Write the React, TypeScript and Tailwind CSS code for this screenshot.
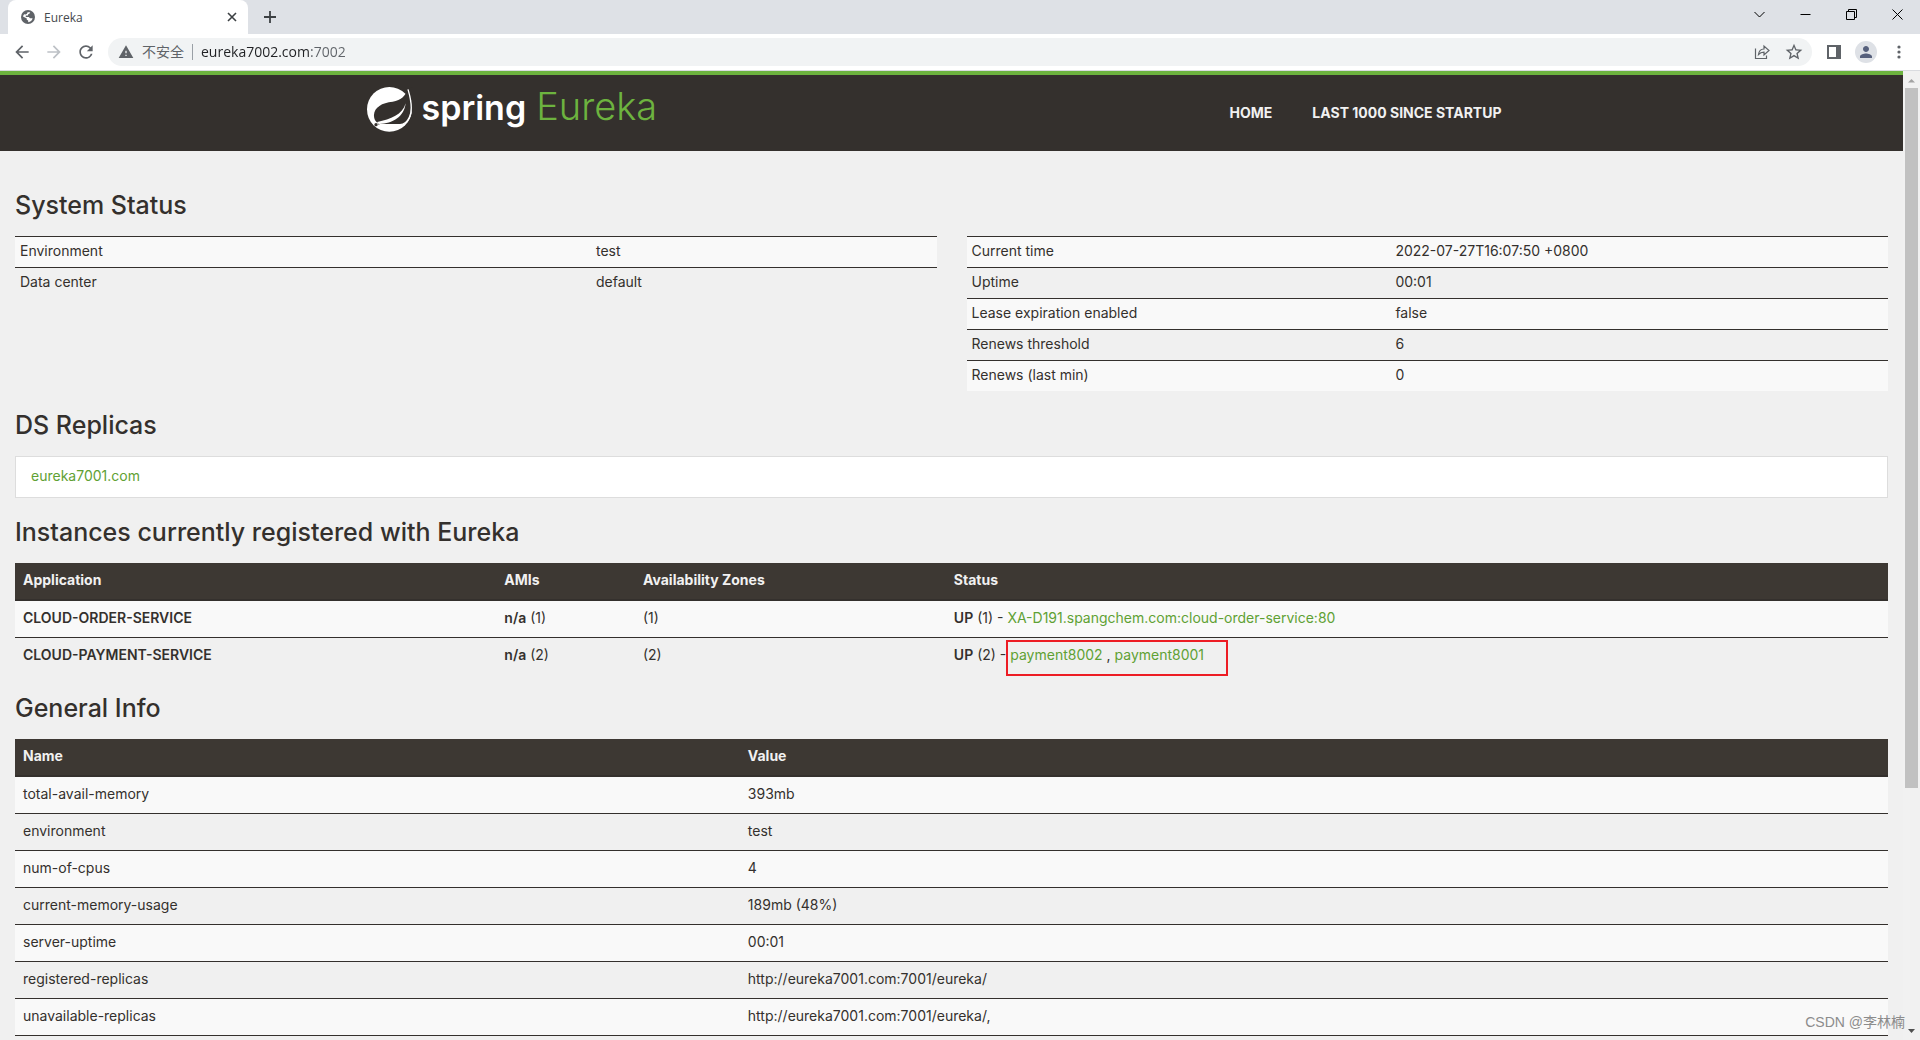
import type { ReactNode } from 'react';
import { MdArrowBack, MdArrowForward, MdPerson, MdRefresh, MdStarBorder, MdWarning } from 'react-icons/md';

const GENERAL_STATUS = [
  { name: 'Environment', value: 'test' },
  { name: 'Data center', value: 'default' },
];

const LEASE_STATUS = [
  { name: 'Current time', value: '2022-07-27T16:07:50 +0800' },
  { name: 'Uptime', value: '00:01' },
  { name: 'Lease expiration enabled', value: 'false' },
  { name: 'Renews threshold', value: '6' },
  { name: 'Renews (last min)', value: '0' },
];

const GENERAL_INFO = [
  { name: 'total-avail-memory', value: '393mb' },
  { name: 'environment', value: 'test' },
  { name: 'num-of-cpus', value: '4' },
  { name: 'current-memory-usage', value: '189mb (48%)' },
  { name: 'server-uptime', value: '00:01' },
  { name: 'registered-replicas', value: 'http://eureka7001.com:7001/eureka/' },
  { name: 'unavailable-replicas', value: 'http://eureka7001.com:7001/eureka/,' },
];

const GlobeIcon = () => (
  <svg className="size-[14px]" viewBox="0 0 14 14" aria-hidden="true">
    <circle cx="7" cy="7" r="7" fill="#5f6368" />
    <path
      d="M6.6 2.2H9.2L8.6 3.6 7 4.4V5.6H4.8V7H7.8L9 8.2H11.6C11.2 10.4 9.4 12 7.2 12.2V10.6L5.8 9.8V8.4L2 6.6C2.2 5.6 2.6 4.8 3.2 4.2L4.8 4.4 6 3.8Z"
      fill="#fff"
    />
  </svg>
);

const SpringLeaf = () => (
  <svg className="size-[46px]" viewBox="81 51 138 138" aria-hidden="true">
    <circle cx="148" cy="118" r="67" fill="#fff" />
    {/* leaf body, its right rim and the vein */}
    <path d="M204 56C198 76 184 90 158 95C126 98 103 112 102 134C101 146 106 154 112 158L116 164H180C192 164 202 155 208 142L222 120V50Z" fill="#34302d" />
    <path d="M204 58C213 88 220 118 208 142C202 155 192 164 180 164H118" fill="none" stroke="#fff" strokeWidth="4" />
    <path d="M206 66C216 92 220 122 206 148L200 160C208 150 216 136 216 118C216 98 212 80 206 66Z" fill="#fff" />
    <path d="M197 100C188 134 152 148 112 156C111 160 114 162 118 162C158 160 192 142 197 100Z" fill="#fff" />
    <circle cx="108" cy="164" r="5" fill="#34302d" />
  </svg>
);

const WindowButton = ({ label, children }: { label: string; children: ReactNode }) => (
  <button aria-label={label} className="flex w-[46px] items-center justify-center">
    <svg className="size-[11px]" viewBox="0 0 11 11" fill="none" stroke="#000">
      {children}
    </svg>
  </button>
);

const BrowserChrome = () => (
  <header className="font-['Open_Sans','Noto_Sans_CJK_SC',sans-serif]">
    <div className="flex h-[34px] items-center bg-[#dee1e6] pl-2">
      <div className="flex h-full w-60 items-center rounded-t-lg bg-white pr-[9px] pl-[13px] text-xs text-[#45494d]">
        <GlobeIcon />
        <span className="ml-[9px] flex-1 pt-px">Eureka</span>
        <button aria-label="Close tab" className="p-0.5">
          <svg className="size-[10px]" viewBox="0 0 10 10" stroke="#3c4043" strokeWidth="1.6">
            <path d="M1 1 9 9M9 1 1 9" />
          </svg>
        </button>
      </div>
      <button aria-label="New tab" className="ml-4">
        <svg className="size-3" viewBox="0 0 12 12" stroke="#3c4043" strokeWidth="1.8">
          <path d="M6 0V12M0 6H12" />
        </svg>
      </button>
      <div className="mb-[6px] ml-auto flex">
        <WindowButton label="Search tabs">
          <path d="M.5 3 5.5 8 10.5 3" />
        </WindowButton>
        <WindowButton label="Minimize">
          <path d="M.5 5.5H10.5" />
        </WindowButton>
        <WindowButton label="Restore">
          <path d="M.5 2.5H8.5V10.5H.5ZM2.5 2.5V.5H10.5V8.5H8.5" />
        </WindowButton>
        <WindowButton label="Close">
          <path d="M.5 .5 10.5 10.5M10.5 .5 .5 10.5" />
        </WindowButton>
      </div>
    </div>
    <div className="flex h-[37px] items-center border-b border-[#dadce0] bg-white pr-[11px] pl-3 text-[#5f6368]">
      <button aria-label="Back" className="mr-3">
        <MdArrowBack className="size-5" />
      </button>
      <button aria-label="Forward" className="mr-3 text-[#bdc1c6]">
        <MdArrowForward className="size-5" />
      </button>
      <button aria-label="Reload" className="mr-3">
        <MdRefresh className="size-5" />
      </button>
      <div className="flex h-7 flex-1 items-center rounded-full bg-[#f1f3f4] pr-2 pl-[10px] text-sm">
        <MdWarning className="size-4" />
        <span className="ml-2 whitespace-nowrap">不安全</span>
        <span className="mx-2 h-4 w-px bg-[#9aa0a6]"></span>
        <input
          aria-label="Address"
          defaultValue="eureka7002.com:7002"
          className="min-w-0 flex-1 bg-[linear-gradient(to_right,#202124_110px,#5f6368_110px)] bg-clip-text text-transparent outline-none"
        />
        <button aria-label="Share" className="mr-[14px]">
          <svg className="size-4" viewBox="0 0 16 16" fill="none" stroke="currentColor" strokeWidth="1.2">
            <path d="M1.5 4.5V14.5H12.5V11.5M4.5 10.5C5 6.5 7 5 10 5V2L15 6.5 10 11V8.2C7.5 8.2 6 8.8 4.5 10.5Z" />
          </svg>
        </button>
        <button aria-label="Bookmark">
          <MdStarBorder className="size-5" />
        </button>
      </div>
      <button aria-label="Side panel" className="ml-[15px]">
        <svg className="size-[14px]" viewBox="0 0 14 14" fill="currentColor">
          <path d="M0 0H14V14H0ZM2 2V12H9V2Z" fillRule="evenodd" />
        </svg>
      </button>
      <button aria-label="Profile" className="ml-[14px] flex size-[22px] items-center justify-center rounded-full bg-[#dee1e6] text-[#56607c]">
        <MdPerson className="size-[18px]" />
      </button>
      <button aria-label="Menu" className="ml-3 flex h-5 w-5 items-center justify-center">
        <svg className="h-[14px] w-1" viewBox="0 0 4 14" fill="currentColor">
          <circle cx="2" cy="2" r="1.6" />
          <circle cx="2" cy="7" r="1.6" />
          <circle cx="2" cy="12" r="1.6" />
        </svg>
      </button>
    </div>
  </header>
);

const SectionTitle = ({ children }: { children: string }) => (
  <h1 className="mt-[19px] mb-4 text-[25px] leading-[30px] font-medium">{children}</h1>
);

const TABLE = 'w-full table-fixed border-separate border-spacing-0';
const HEAD_ROW = 'bg-[#3d3833] text-left text-[#f1f1f1] *:border-b-2 *:border-[#34302d]';
const BODY_ROW = 'odd:bg-[#f9f9f9] *:border-b *:border-[#34302d]';
const CELL = 'px-2 pt-[7px] pb-[9px]';
const STATUS_CELL = 'px-[5px] pt-1 pb-[6px]';
const LINK = 'text-[#5fa134] hover:underline';

const StatusTable = ({ rows, nameWidth }: { rows: { name: string; value: string }[]; nameWidth: string }) => (
  <table className={TABLE}>
    <tbody>
      {rows.map((row) => (
        <tr key={row.name} className="odd:bg-[#f9f9f9] *:border-t *:border-[#34302d]">
          <td className={`${STATUS_CELL} ${nameWidth}`}>{row.name}</td>
          <td className={STATUS_CELL}>{row.value}</td>
        </tr>
      ))}
    </tbody>
  </table>
);

const Instances = () => (
  <table className={TABLE}>
    <thead>
      <tr className={HEAD_ROW}>
        <th className={`w-[25.7%] ${CELL}`}>Application</th>
        <th className={`w-[7.4%] ${CELL}`}>AMIs</th>
        <th className={`w-[16.6%] ${CELL}`}>Availability Zones</th>
        <th className={CELL}>Status</th>
      </tr>
    </thead>
    <tbody>
      <tr className={BODY_ROW}>
        <td className={`font-semibold ${CELL}`}>CLOUD-ORDER-SERVICE</td>
        <td className={CELL}>
          <b className="font-semibold">n/a</b> (1)
        </td>
        <td className={CELL}>(1)</td>
        <td className={CELL}>
          <b className="font-semibold">UP</b> (1) -{' '}
          <a href="#order" className={LINK}>
            XA-D191.spangchem.com:cloud-order-service:80
          </a>
        </td>
      </tr>
      <tr>
        <td className={`font-semibold ${CELL}`}>CLOUD-PAYMENT-SERVICE</td>
        <td className={CELL}>
          <b className="font-semibold">n/a</b> (2)
        </td>
        <td className={CELL}>(2)</td>
        <td className={CELL}>
          <b className="font-semibold">UP</b> (2) -{' '}
          <span className="relative">
            <a href="#payment8002" className={LINK}>
              payment8002
            </a>{' '}
            ,{' '}
            <a href="#payment8001" className={LINK}>
              payment8001
            </a>
            <span className="pointer-events-none absolute -top-[6px] -right-6 -left-1 h-9 border-2 border-[#ed1c24]"></span>
          </span>
        </td>
      </tr>
    </tbody>
  </table>
);

const GeneralInfo = () => (
  <table className={TABLE}>
    <thead>
      <tr className={HEAD_ROW}>
        <th className={`w-[38.7%] ${CELL}`}>Name</th>
        <th className={CELL}>Value</th>
      </tr>
    </thead>
    <tbody>
      {GENERAL_INFO.map((info) => (
        <tr key={info.name} className={BODY_ROW}>
          <td className={CELL}>{info.name}</td>
          <td className={CELL}>{info.value}</td>
        </tr>
      ))}
    </tbody>
  </table>
);

const Scrollbar = () => (
  <div className="flex w-[17px] flex-col items-center justify-between bg-[#f1f1f1] py-[6px]" aria-hidden="true">
    <div className="flex w-full flex-1 flex-col items-center">
      <svg className="h-[11px] w-[7px]" viewBox="0 0 7 11">
        <path d="M0 5.5 3.5 2 7 5.5Z" fill="#a3a3a3" />
      </svg>
      <div className="h-[73.5%] w-[13px] bg-[#c1c1c1]"></div>
    </div>
    <svg className="h-[5px] w-[7px]" viewBox="0 0 7 5">
      <path d="M0 0H7L3.5 4Z" fill="#505050" />
    </svg>
  </div>
);

const App = () => {
  return (
    <div className="relative flex min-h-screen flex-col overflow-hidden bg-[#f0f0f0]">
      <BrowserChrome />
      <div className="flex flex-1">
        <main className="min-w-0 flex-1 font-[Inter,sans-serif] text-sm leading-5 text-[#34302d]">
          <nav className="h-20 border-t-4 border-[#6db33f] bg-[#34302d]">
            <div className="mx-auto flex h-full w-full max-w-[1170px] items-center justify-between">
              <a href="#home" className="mb-[6px] flex items-center">
                <SpringLeaf />
                <span className="mb-[6px] ml-[9px] flex items-baseline gap-[10px] leading-[44px]">
                  <span className="text-[34px] font-semibold text-white">spring</span>
                  <span className="text-[38px] font-light text-[#6db33f]">Eureka</span>
                </span>
              </a>
              <div className="flex gap-10 pr-[35px] font-bold text-[#f1f1f1]">
                <a href="#home">HOME</a>
                <a href="#lastn">LAST 1000 SINCE STARTUP</a>
              </div>
            </div>
          </nav>
          <div className="flow-root px-[15px] pt-5">
            <SectionTitle>System Status</SectionTitle>
            <div className="grid grid-cols-2 items-start gap-[30px]">
              <StatusTable rows={GENERAL_STATUS} nameWidth="w-[62.5%]" />
              <StatusTable rows={LEASE_STATUS} nameWidth="w-[46%]" />
            </div>
            <SectionTitle>DS Replicas</SectionTitle>
            <ul>
              <li className="border border-[#ddd] bg-white px-[15px] pt-[9px] pb-[11px]">
                <a href="#eureka7001" className={LINK}>
                  eureka7001.com
                </a>
              </li>
            </ul>
            <SectionTitle>Instances currently registered with Eureka</SectionTitle>
            <Instances />
            <SectionTitle>General Info</SectionTitle>
            <GeneralInfo />
          </div>
        </main>
        <Scrollbar />
      </div>
      <p className="absolute right-[15px] bottom-2 font-['Liberation_Sans','Noto_Sans_CJK_SC',sans-serif] text-sm leading-5 text-[#8c8c8c]">CSDN @李林楠</p>
    </div>
  );
};

export default App;
